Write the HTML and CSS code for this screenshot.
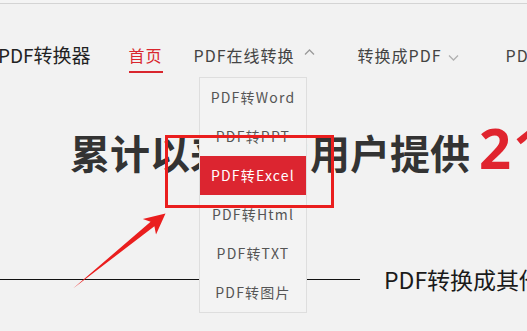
FILE: index.html
```html
<!DOCTYPE html>
<html lang="zh-CN">
<head>
<meta charset="utf-8">
<link rel="stylesheet" href="styles.css">
</head>
<body>
<div class="page">
  <div class="topline"></div>
  <header class="nav">
    <div class="brand">PDF转换器</div>
    <a class="nav-item active">首页</a>
    <a class="nav-item nav-online">PDF在线转换<svg class="caret" width="11" height="6" viewBox="0 0 11 6"><path d="M1 5.5 L5.5 1 L10 5.5" fill="none" stroke="#9a9a9a" stroke-width="1.3"/></svg></a>
    <a class="nav-item nav-topdf">转换成PDF<svg class="caret down" width="11" height="6" viewBox="0 0 11 6"><path d="M1 0.5 L5.5 5 L10 0.5" fill="none" stroke="#b0b0b0" stroke-width="1.3"/></svg></a>
    <a class="nav-item nav-more">PDF</a>
  </header>

  <h1 class="headline">累计以来已为用户提供 <span class="num">21</span></h1>

  <div class="section-title">
    <span class="rule"></span>
    <span class="title-text">PDF转换成其他</span>
  </div>

  <ul class="dropdown">
    <li>PDF转Word</li>
    <li>PDF转PPT</li>
    <li class="selected">PDF转Excel</li>
    <li>PDF转Html</li>
    <li>PDF转TXT</li>
    <li>PDF转图片</li>
  </ul>

  <svg class="annotation" width="527" height="331" viewBox="0 0 527 331">
    <rect x="166.5" y="136.5" width="166" height="70" fill="none" stroke="#ea1e1e" stroke-width="3"/>
    <polygon points="73,288.5 154.4,226.3 156,234.5 165.5,213.5 142.8,219 150.6,221.8" fill="#ea1e1e"/>
  </svg>
</div>
</body>
</html>
```

FILE: styles.css
```css
* { box-sizing: border-box; }
html, body { margin: 0; padding: 0; }
body {
  background: #f2f2f2;
  font-family: "Noto Sans CJK SC", "Noto Sans", sans-serif;
  color: #333;
  width: 527px;
  height: 331px;
  overflow: hidden;
}
.page {
  position: relative;
  width: 527px;
  height: 331px;
  overflow: hidden;
}
.topline {
  height: 4px;
  border-bottom: 1px solid #d4d4d4;
  background: #f4f4f4;
}
.nav {
  display: flex;
  align-items: flex-start;
  padding-top: 37px;
  margin-left: -2px;
  white-space: nowrap;
  height: 74px;
}
.brand {
  font-size: 19px;
  line-height: 28px;
  color: #222;
}
.nav-item {
  display: flex;
  align-items: center;
  font-size: 16px;
  line-height: 28px;
  letter-spacing: 1px;
  color: #444;
  text-decoration: none;
}
.nav-item.active {
  margin-left: 38px;
  color: #d9262e;
  padding-bottom: 2px;
  border-bottom: 2px solid #d9262e;
}
.nav-online { margin-left: 31px; }
.caret { margin-left: 9px; margin-top: -6px; }
.caret.down { margin-left: 6px; margin-top: 6px; }
.nav-topdf { margin-left: 43px; }
.nav-more { margin-left: 47px; }

.headline {
  margin: 45px 0 0 70px;
  font-size: 40px;
  line-height: 48px;
  font-weight: 700;
  color: #333;
  white-space: nowrap;
}
.headline .num {
  color: #e0242e;
  font-family: "Noto Sans", sans-serif;
  font-size: 56px;
  line-height: 48px;
  letter-spacing: 2px;
}

.section-title {
  display: flex;
  align-items: center;
  margin-top: 85px;
  height: 36px;
  white-space: nowrap;
}
.rule {
  width: 360px;
  height: 1px;
  background: #111;
  flex: none;
}
.title-text {
  margin-left: 24px;
  font-size: 23px;
  color: #1a1a1a;
}

.dropdown {
  position: absolute;
  left: 199px;
  top: 77px;
  width: 108px;
  margin: 0;
  padding: 0;
  list-style: none;
  background: #f3f3f3;
  border: 1px solid #dedede;
}
.dropdown li {
  height: 39px;
  line-height: 39px;
  text-align: center;
  font-size: 14px;
  letter-spacing: 1.2px;
  color: #555;
}
.dropdown li.selected {
  background: #dc2530;
  color: #fff;
}
.annotation {
  position: absolute;
  left: 0;
  top: 0;
  pointer-events: none;
}
```
